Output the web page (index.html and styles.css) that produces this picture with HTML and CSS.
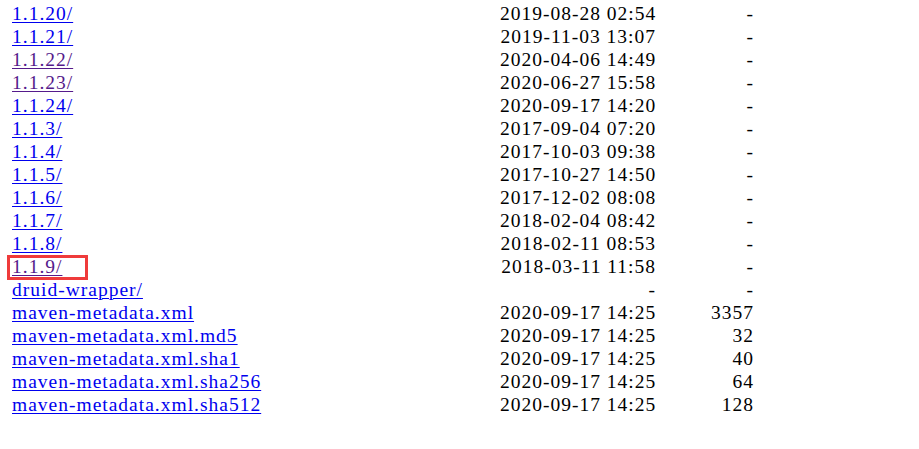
FILE: index.html
```html
<!DOCTYPE html>
<html>
<head>
<meta charset="utf-8">
<link rel="stylesheet" href="styles.css">
</head>
<body>
<div class="listing">
  <div class="row"><a class="link" href="#">1.1.20/</a><span class="date">2019-08-28 02:54</span><span class="size">-</span></div>
  <div class="row"><a class="link" href="#">1.1.21/</a><span class="date">2019-11-03 13:07</span><span class="size">-</span></div>
  <div class="row"><a class="link visited" href="#">1.1.22/</a><span class="date">2020-04-06 14:49</span><span class="size">-</span></div>
  <div class="row"><a class="link visited" href="#">1.1.23/</a><span class="date">2020-06-27 15:58</span><span class="size">-</span></div>
  <div class="row"><a class="link" href="#">1.1.24/</a><span class="date">2020-09-17 14:20</span><span class="size">-</span></div>
  <div class="row"><a class="link" href="#">1.1.3/</a><span class="date">2017-09-04 07:20</span><span class="size">-</span></div>
  <div class="row"><a class="link" href="#">1.1.4/</a><span class="date">2017-10-03 09:38</span><span class="size">-</span></div>
  <div class="row"><a class="link" href="#">1.1.5/</a><span class="date">2017-10-27 14:50</span><span class="size">-</span></div>
  <div class="row"><a class="link" href="#">1.1.6/</a><span class="date">2017-12-02 08:08</span><span class="size">-</span></div>
  <div class="row"><a class="link" href="#">1.1.7/</a><span class="date">2018-02-04 08:42</span><span class="size">-</span></div>
  <div class="row"><a class="link" href="#">1.1.8/</a><span class="date">2018-02-11 08:53</span><span class="size">-</span></div>
  <div class="row highlighted"><a class="link visited" href="#">1.1.9/</a><span class="date">2018-03-11 11:58</span><span class="size">-</span><span class="mark"></span></div>
  <div class="row"><a class="link" href="#">druid-wrapper/</a><span class="date">-</span><span class="size">-</span></div>
  <div class="row"><a class="link" href="#">maven-metadata.xml</a><span class="date">2020-09-17 14:25</span><span class="size">3357</span></div>
  <div class="row"><a class="link" href="#">maven-metadata.xml.md5</a><span class="date">2020-09-17 14:25</span><span class="size">32</span></div>
  <div class="row"><a class="link" href="#">maven-metadata.xml.sha1</a><span class="date">2020-09-17 14:25</span><span class="size">40</span></div>
  <div class="row"><a class="link" href="#">maven-metadata.xml.sha256</a><span class="date">2020-09-17 14:25</span><span class="size">64</span></div>
  <div class="row"><a class="link" href="#">maven-metadata.xml.sha512</a><span class="date">2020-09-17 14:25</span><span class="size">128</span></div>
</div>
</body>
</html>
```

FILE: styles.css
```css
html, body {
  margin: 0;
  padding: 0;
  background: #ffffff;
}

.listing {
  padding: 2px 0 0 12px;
  font-family: "Liberation Serif", "Times New Roman", serif;
  font-size: 19.5px;
  line-height: 23px;
  letter-spacing: 1px;
  color: #000000;
}

.row {
  display: grid;
  grid-template-columns: 488px 156px 98px;
  height: 23px;
  white-space: nowrap;
}

.highlighted {
  position: relative;
}

.link {
  justify-self: start;
  color: #0000ee;
  text-decoration: underline;
  text-underline-offset: 2px;
  text-decoration-thickness: 1px;
}

.link.visited {
  color: #551a8b;
}

.date {
  text-align: right;
}

.size {
  text-align: right;
}

.mark {
  position: absolute;
  left: -5px;
  top: 0;
  width: 75px;
  height: 19px;
  border: 3px solid #ef3b3b;
}
```
